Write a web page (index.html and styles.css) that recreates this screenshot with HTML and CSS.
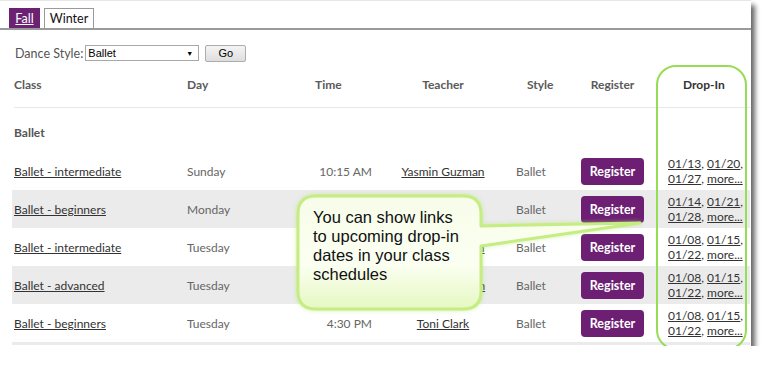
FILE: index.html
```html
<!DOCTYPE html>
<html>
<head>
<meta charset="utf-8">
<link rel="stylesheet" href="styles.css">
</head>
<body>
<div class="frame">
  <div class="tabs">
    <a class="tab active" href="#">Fall</a>
    <span class="tab">Winter</span>
  </div>
  <div class="filter">
    <span class="label">Dance Style:</span>
    <div class="select"><span>Ballet</span><span class="arrow">&#9660;</span></div>
    <button class="go">Go</button>
  </div>
  <div class="table">
    <div class="row head">
      <div class="c-class">Class</div>
      <div class="c-day">Day</div>
      <div class="c-time">Time</div>
      <div class="c-teacher">Teacher</div>
      <div class="c-style">Style</div>
      <div class="c-reg">Register</div>
      <div class="c-drop">Drop-In</div>
    </div>
    <div class="group">Ballet</div>
    <div class="row">
      <div class="c-class"><a href="#">Ballet - intermediate</a></div>
      <div class="c-day">Sunday</div>
      <div class="c-time">10:15 AM</div>
      <div class="c-teacher"><a href="#">Yasmin Guzman</a></div>
      <div class="c-style">Ballet</div>
      <div class="c-reg"><button class="reg">Register</button></div>
      <div class="c-drop"><a href="#">01/13</a>, <a href="#">01/20</a>,<br><a href="#">01/27</a>, <a href="#">more...</a></div>
    </div>
    <div class="row alt">
      <div class="c-class"><a href="#">Ballet - beginners</a></div>
      <div class="c-day">Monday</div>
      <div class="c-time">6:00 PM</div>
      <div class="c-teacher"><a href="#">Toni Clark</a></div>
      <div class="c-style">Ballet</div>
      <div class="c-reg"><button class="reg">Register</button></div>
      <div class="c-drop"><a href="#">01/14</a>, <a href="#">01/21</a>,<br><a href="#">01/28</a>, <a href="#">more...</a></div>
    </div>
    <div class="row">
      <div class="c-class"><a href="#">Ballet - intermediate</a></div>
      <div class="c-day">Tuesday</div>
      <div class="c-time">3:00 PM</div>
      <div class="c-teacher"><a href="#">Yasmin Guzman</a></div>
      <div class="c-style">Ballet</div>
      <div class="c-reg"><button class="reg">Register</button></div>
      <div class="c-drop"><a href="#">01/08</a>, <a href="#">01/15</a>,<br><a href="#">01/22</a>, <a href="#">more...</a></div>
    </div>
    <div class="row alt">
      <div class="c-class"><a href="#">Ballet - advanced</a></div>
      <div class="c-day">Tuesday</div>
      <div class="c-time">3:30 PM</div>
      <div class="c-teacher"><a href="#">Jennifer Osborn</a></div>
      <div class="c-style">Ballet</div>
      <div class="c-reg"><button class="reg">Register</button></div>
      <div class="c-drop"><a href="#">01/08</a>, <a href="#">01/15</a>,<br><a href="#">01/22</a>, <a href="#">more...</a></div>
    </div>
    <div class="row">
      <div class="c-class"><a href="#">Ballet - beginners</a></div>
      <div class="c-day">Tuesday</div>
      <div class="c-time">4:30 PM</div>
      <div class="c-teacher"><a href="#">Toni Clark</a></div>
      <div class="c-style">Ballet</div>
      <div class="c-reg"><button class="reg">Register</button></div>
      <div class="c-drop"><a href="#">01/08</a>, <a href="#">01/15</a>,<br><a href="#">01/22</a>, <a href="#">more...</a></div>
    </div>
    <div class="row alt cut"></div>
  </div>
  <div class="ring"></div>
  <div class="callout">
    <svg class="bubble" width="360" height="130" viewBox="0 0 360 130">
      <defs>
        <linearGradient id="fill" x1="0" y1="0" x2="0" y2="1">
          <stop offset="0" stop-color="#f7fde9"/>
          <stop offset="0.6" stop-color="#fbfff2"/>
          <stop offset="1" stop-color="#e6f8c2"/>
        </linearGradient>
      </defs>
      <path d="M 26,7 H 173 Q 191,7 191,25 V 37 L 350,34 L 191,57 V 102 Q 191,120 173,120 H 26 Q 8,120 8,102 V 25 Q 8,7 26,7 Z" fill="url(#fill)" stroke="#c6ec84" stroke-width="3" stroke-linejoin="round"/>
    </svg>
    <div class="callout-text">You can show links<br>to upcoming drop-in<br>dates in your class<br>schedules</div>
  </div>
</div>
</body>
</html>
```
FILE: styles.css
```css
html, body {
  margin: 0;
  padding: 0;
  background: #ffffff;
}

.frame {
  position: relative;
  width: 751px;
  height: 346px;
  background: #ffffff;
  border-top: 1px solid #e6e6e6;
  box-sizing: border-box;
  box-shadow: 4px 5px 5px rgba(0, 0, 0, 0.6);
  font-family: Lato, "Open Sans", sans-serif;
  font-size: 12px;
  color: #666;
}

.tabs {
  display: flex;
  gap: 4px;
  padding: 7px 0 0 9px;
  border-bottom: 2px solid #9a9a9a;
  height: 20px;
}

.tab {
  display: flex;
  align-items: center;
  justify-content: center;
  height: 20px;
  box-sizing: border-box;
  font-size: 12.5px;
  color: #111;
}

.tab.active {
  width: 31px;
  background: #6c2272;
  color: #fff;
  text-decoration: underline;
}

.tab:not(.active) {
  width: 50px;
  border: 1px solid #9a9a9a;
  border-bottom: none;
  background: #fff;
}

.filter {
  display: flex;
  align-items: center;
  margin-top: 15px;
  padding-left: 15px;
  height: 16px;
}

.label {
  color: #555;
  font-size: 12.5px;
  margin-right: 2px;
}

.select {
  display: flex;
  justify-content: space-between;
  align-items: center;
  width: 114px;
  height: 16px;
  box-sizing: border-box;
  border: 1px solid #a8a8a8;
  padding: 0 5px 0 2px;
  font-family: "Liberation Sans", Arial, sans-serif;
  font-size: 11px;
  color: #000;
}

.arrow {
  font-size: 7px;
}

.go {
  margin-left: 6px;
  width: 41px;
  height: 17px;
  padding: 0;
  border: 1px solid #acacac;
  border-radius: 2px;
  background: linear-gradient(#f4f4f4, #dedede);
  font-family: "Liberation Sans", Arial, sans-serif;
  font-size: 11px;
  color: #000;
}

.table {
  margin-left: 12px;
  width: 738px;
}

.row {
  display: grid;
  grid-template-columns: 175px 113px 80px 126px 66px 81px 97px;
  align-items: center;
  height: 38px;
}

.row.alt {
  background: #ebebeb;
}

.row.cut {
  height: 3px;
}

.row.head {
  height: 46px;
  margin-left: 2px;
  grid-template-columns: 173px 113px 80px 126px 66px 81px 97px;
  border-bottom: 1px solid #e8e8e8;
  font-weight: 700;
  color: #5a5a5a;
}

.row.head .c-class { padding-left: 0; }
.row.head .c-time { text-align: left; padding: 0 0 0 15px; }
.row.head .c-style { padding-left: 21px; }
.row.head .c-drop { padding-left: 30px; }

.group {
  height: 44px;
  display: flex;
  align-items: center;
  padding-left: 2px;
  padding-top: 4px;
  box-sizing: border-box;
  font-weight: 700;
  color: #555;
}

.c-class { padding-left: 2px; }
.c-time { text-align: right; padding-right: 8px; }
.c-teacher { text-align: center; }
.c-style { padding-left: 10px; }
.c-reg { display: flex; justify-content: center; }
.c-drop { padding-left: 15px; line-height: 15px; }

.row a {
  color: #333;
  text-decoration: underline;
}

.c-drop {
  color: #333;
}

.reg {
  width: 63px;
  height: 27px;
  padding: 0;
  border: none;
  border-radius: 4px;
  background: #6c1f73;
  color: #fff;
  font-family: Lato, "Open Sans", sans-serif;
  font-weight: 700;
  font-size: 12.5px;
}

.ring {
  position: absolute;
  left: 656px;
  top: 64px;
  width: 91px;
  height: 285px;
  box-sizing: border-box;
  border: 2px solid #97dc55;
  border-radius: 20px;
}

.callout {
  position: absolute;
  left: 290px;
  top: 188px;
  width: 360px;
  height: 130px;
}

.bubble {
  position: absolute;
  left: 0;
  top: 0;
  filter: drop-shadow(0 0 2px rgba(180, 230, 110, 0.6));
}

.callout-text {
  position: absolute;
  left: 23px;
  top: 19px;
  font-family: "Liberation Sans", Arial, sans-serif;
  font-size: 16.5px;
  line-height: 19px;
  color: #111;
}
```
